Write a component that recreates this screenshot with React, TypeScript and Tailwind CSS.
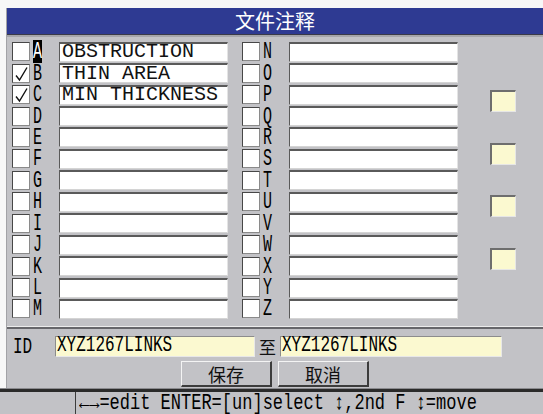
const LEFT = 'ABCDEFGHIJKLM'.split('')
const RIGHT = 'NOPQRSTUVWXYZ'.split('')

const NOTES: Record<string, string> = {
  A: 'OBSTRUCTION',
  B: 'THIN AREA',
  C: 'MIN THICKNESS',
}
const CHECKED = ['B', 'C']

const mono = "font-['Liberation_Mono','DejaVu_Sans_Mono',monospace]"
const cjk = "font-['Noto_Sans_CJK_SC','Noto_Sans',sans-serif]"

function Check() {
  return (
    <svg width="16" height="17" viewBox="0 0 16 17" fill="none">
      <path d="M3 10.5 L6.5 15 L14 2.5" stroke="#111" strokeWidth="1.4" />
    </svg>
  )
}

function Row({ ch }: { ch: string }) {
  const active = ch === 'A'
  return (
    <div className="flex items-center h-[21.45px]">
      <div className="w-[18px] h-[19px] bg-white border border-[#474747] border-r-[#8a8a8a] border-b-[#8a8a8a] flex items-center justify-center">
        {CHECKED.includes(ch) && <Check />}
      </div>
      <div className="w-[29px] h-full flex items-center pl-[3px]">
        {active ? (
          <div className="w-[9px] h-[23px] bg-black text-white flex items-center justify-center">
            <div className={`scale-y-[1.6] translate-y-[1px] text-[15px] leading-[11px] ${mono}`}>{ch}</div>
          </div>
        ) : (
          <div className="w-[9px] h-[23px] text-black flex items-center justify-center">
            <div className={`scale-y-[1.6] translate-y-[1px] text-[15px] leading-[11px] ${mono}`}>{ch}</div>
          </div>
        )}
      </div>
      <div className="w-[169px] h-[20px] bg-white border-t-2 border-l border-t-[#5a5a5a] border-l-[#5a5a5a] border-r border-b border-r-[#e4e4e4] border-b-[#d4d4d4] flex items-center pl-[2px]">
        <span className={`text-[20px] leading-none text-[#111] whitespace-pre ${mono}`}>{NOTES[ch] ?? ''}</span>
      </div>
    </div>
  )
}

function YellowField({ w, text }: { w: string; text: string }) {
  return (
    <div
      className={`${w} h-[21px] bg-[#fbf9d0] border-t border-l border-[#8c8c8c] border-r border-b border-r-[#e8e8e8] border-b-[#e8e8e8] flex items-center pl-[1px]`}
    >
      <span className={`inline-block scale-y-[1.35] text-[16px] leading-none text-black ${mono}`}>{text}</span>
    </div>
  )
}

function Button({ label }: { label: string }) {
  return (
    <div
      className={`w-[91px] h-[26px] flex items-center justify-center border-t border-l border-[#f4f4f4] border-r-2 border-b-2 border-r-[#3c3c3c] border-b-[#3c3c3c] text-[18px] leading-none text-[#111] ${cjk}`}
    >
      {label}
    </div>
  )
}

export default function App() {
  return (
    <div className="w-[543px] h-[414px] overflow-hidden bg-[#f7f7f7] flex flex-col">
      <div className="h-[8px] shrink-0" />
      <div className="flex h-[380px] shrink-0">
        <div className="w-[6px] shrink-0" />
        <div className="flex-1 flex flex-col border-l border-[#a2a2a6] bg-[#c2c2c6]">
          {/* title */}
          <div
            className={`h-[26px] bg-[#2e3a92] text-white text-[20px] leading-none flex items-center justify-center ${cjk}`}
          >
            文件注释
          </div>
          <div className="h-[1px] bg-[#3a3a48]" />
          <div className="h-[2px] bg-[#a6a6aa]" />

          {/* annotation grid */}
          <div className="h-[290px] flex pt-[4px] pl-[5px] border-b border-[#ececec]">
            <div className="flex flex-col">
              {LEFT.map(c => (
                <Row key={c} ch={c} />
              ))}
            </div>
            <div className="flex flex-col ml-[14px]">
              {RIGHT.map(c => (
                <Row key={c} ch={c} />
              ))}
            </div>
            <div className="flex flex-col pt-[49px] pl-[32px] gap-[30.5px]">
              {[0, 1, 2, 3].map(i => (
                <div
                  key={i}
                  className="w-[26px] h-[22px] bg-[#fbf9d0] border-t-2 border-l-2 border-[#6e6e6e] border-r border-b border-r-[#e6e6e6] border-b-[#e6e6e6]"
                />
              ))}
            </div>
          </div>

          {/* id range + buttons */}
          <div className="flex-1 border-t-2 border-[#66666a] flex flex-col pt-[5px]">
            <div className="flex items-center">
              <div className="w-[48px] pl-[6px]">
                <span className={`inline-block scale-y-[1.35] text-[16px] leading-none text-black ${mono}`}>ID</span>
              </div>
              <YellowField w="w-[200px]" text="XYZ1267LINKS" />
              <div className={`w-[25px] text-center text-[17px] leading-none text-[#111] ${cjk}`}>至</div>
              <YellowField w="w-[222px]" text="XYZ1267LINKS" />
            </div>
            <div className="flex gap-[6px] pl-[174px] mt-[3px]">
              <Button label="保存" />
              <Button label="取消" />
            </div>
          </div>
        </div>
      </div>

      {/* status bar */}
      <div className="h-[1px] bg-[#8a8a8e]" />
      <div className="h-[3px] bg-[#2a2a2a]" />
      <div className="flex-1 flex bg-[#c2c2c6]">
        <div className="w-[76px] border-r border-[#3c3c3c]" />
        <div className="flex items-center pl-[3px]">
          <span className={`inline-block scale-y-[1.3] text-[17px] leading-none text-black whitespace-pre ${mono}`}>
            ←→=edit ENTER=[un]select ↕,2nd F ↕=move
          </span>
        </div>
      </div>
    </div>
  )
}
